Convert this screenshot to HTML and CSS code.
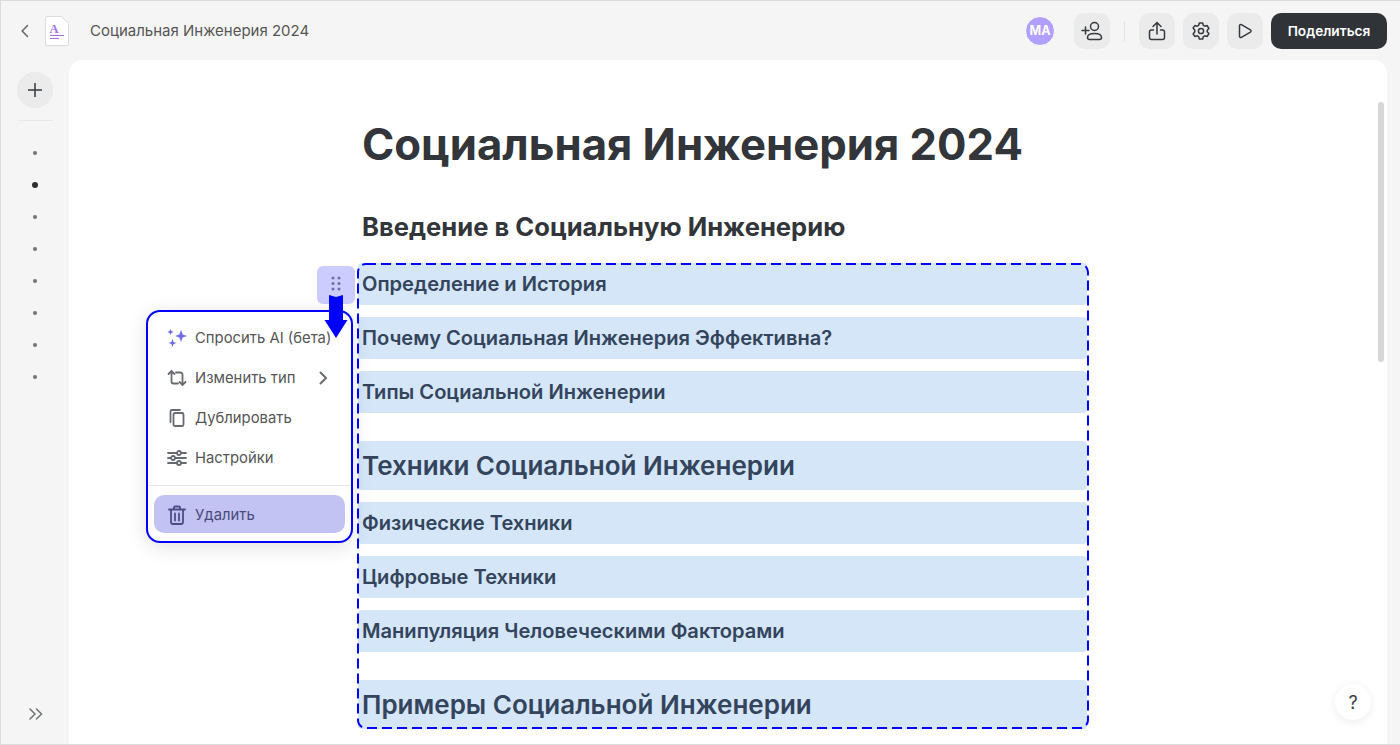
FILE: index.html
```html
<!DOCTYPE html>
<html>
<head>
    <title>Социальная Инженерия 2024</title>
    <link rel="stylesheet" href="styles.css">
</head>
<body>
    <div class="app">
        <div class="topbar">
            <svg class="back-icon" width="10" height="16" viewBox="0 0 10 16"><path d="M7.5 2.5 2.2 8l5.3 5.5"/></svg>
            <svg class="doc-icon" width="24" height="30" viewBox="0 0 24 30">
                <path class="doc-sheet" d="M2 .5h14.500l7 7V27.500a2 2 0 0 1-2 2H2a1.500 1.500 0 0 1-1.500-1.500V2A1.500 1.500 0 0 1 2 .5z"/>
                <text class="doc-letter" x="4.500" y="17">A</text>
                <path class="doc-line" d="M5 19.500h14M5 22.500h9"/>
            </svg>
            <span class="doc-title">Социальная Инженерия 2024</span>
            <div class="topbar-right">
                <div class="avatar">MA</div>
                <div class="icon-btn add-user">
                    <svg width="22" height="20" viewBox="0 0 22 20"><path d="M1 9.500h7M4.500 6v7"/><circle cx="13.500" cy="5.500" r="4"/><path d="M8.500 18.500h10a2 2 0 0 0 2-2c0-2.500-3-4-7-4s-7 1.500-7 4a2 2 0 0 0 2 2z"/></svg>
                </div>
                <div class="topbar-sep"></div>
                <div class="icon-btn">
                    <svg width="18" height="20" viewBox="0 0 18 20"><path d="M9 13V2M5 5.500 9 1.500l4 4"/><path d="M5.500 9H3.500a2 2 0 0 0-2 2v5.500a2 2 0 0 0 2 2h11a2 2 0 0 0 2-2V11a2 2 0 0 0-2-2h-2"/></svg>
                </div>
                <div class="icon-btn">
                    <svg width="18" height="18" viewBox="0 0 18 18"><circle cx="9" cy="9" r="2.600"/><path d="M7.300 1h3.400l.6 2.300 1.600.9 2.300-.6 1.700 2.900-1.700 1.700v1.600l1.700 1.700-1.700 2.900-2.300-.6-1.600.9-.6 2.300H7.300l-.6-2.300-1.600-.9-2.300.6L1.100 12l1.700-2.200V8.200L1.100 6l1.700-2.400 2.300.6 1.600-.9z" stroke-linejoin="round"/></svg>
                </div>
                <div class="icon-btn">
                    <svg width="16" height="16" viewBox="0 0 16 16"><path d="M2.500 2.800c0-1 1-1.600 1.900-1.100l9 5.200c.8.500.8 1.700 0 2.200l-9 5.200c-.9.500-1.900-.1-1.900-1.100z" stroke-linejoin="round"/></svg>
                </div>
                <div class="share-btn">Поделиться</div>
            </div>
        </div>

        <div class="workspace">
            <div class="sidebar">
                <div class="add-btn">
                    <svg width="14" height="14" viewBox="0 0 14 14"><path d="M7 0v14M0 7h14"/></svg>
                </div>
                <div class="sidebar-sep"></div>
                <div class="outline">
                    <span class="dot"></span>
                    <span class="dot active"></span>
                    <span class="dot"></span>
                    <span class="dot"></span>
                    <span class="dot"></span>
                    <span class="dot"></span>
                    <span class="dot"></span>
                    <span class="dot"></span>
                </div>
                <svg class="expand-icon" width="14" height="12" viewBox="0 0 14 12"><path d="M1 1l5 5-5 5M7.500 1l5 5-5 5"/></svg>
            </div>

            <div class="main">
                <div class="doc">
                    <h1>Социальная Инженерия 2024</h1>
                    <h2>Введение в Социальную Инженерию</h2>
                    <div class="selection">
                        <div class="block">Определение и История</div>
                        <div class="block">Почему Социальная Инженерия Эффективна?</div>
                        <div class="block">Типы Социальной Инженерии</div>
                        <div class="block big">Техники Социальной Инженерии</div>
                        <div class="block">Физические Техники</div>
                        <div class="block">Цифровые Техники</div>
                        <div class="block">Манипуляция Человеческими Факторами</div>
                        <div class="block big">Примеры Социальной Инженерии</div>
                    </div>
                </div>

                <svg class="selection-frame" width="732" height="466" viewBox="0 0 732 466"><rect x="1" y="1" width="730" height="464" rx="8"/></svg>

                <div class="scrollbar"></div>

                <div class="drag-handle">
                    <svg width="10" height="18" viewBox="0 0 10 18">
                        <circle cx="2" cy="2" r="1.500"/><circle cx="8" cy="2" r="1.500"/>
                        <circle cx="2" cy="7.500" r="1.500"/><circle cx="8" cy="7.500" r="1.500"/>
                        <circle cx="2" cy="13" r="1.500"/><circle cx="8" cy="13" r="1.500"/>
                    </svg>
                </div>

                <div class="menu">
                    <div class="menu-item">
                        <svg width="20" height="20" viewBox="0 0 20 20" class="sparkle">
                            <path d="M14 2l1.600 4.400L20 8l-4.400 1.600L14 14l-1.600-4.400L8 8l4.400-1.600z"/>
                            <path d="M3.500 1l.9 2.100L6.500 4l-2.100.9L3.500 7l-.9-2.100L.5 4l2.100-.9z"/>
                            <path d="M5.500 11l1.100 2.900 2.900 1.100-2.900 1.100L5.500 19l-1.100-2.900L1.500 15l2.900-1.100z"/>
                        </svg>
                        <span>Спросить AI (бета)</span>
                    </div>
                    <div class="menu-item">
                        <svg width="20" height="18" viewBox="0 0 20 18"><path d="M1.500 5 4.500 2l3 3M4.500 2.500v10a2 2 0 0 0 2 2H11"/><path d="M18.500 13l-3 3-3-3M15.500 15.500v-10a2 2 0 0 0-2-2H9"/></svg>
                        <span>Изменить тип</span>
                        <svg class="menu-chevron" width="9" height="14" viewBox="0 0 9 14"><path d="M1.500 1.500 7 7l-5.500 5.500"/></svg>
                    </div>
                    <div class="menu-item">
                        <svg width="20" height="18" viewBox="0 0 20 18"><rect x="6.500" y="4" width="10" height="13" rx="1.500"/><path d="M13 1H5a1.500 1.500 0 0 0-1.500 1.500V13"/></svg>
                        <span>Дублировать</span>
                    </div>
                    <div class="menu-item">
                        <svg width="20" height="16" viewBox="0 0 20 16"><path d="M1 3h9M14 3h5M1 8h3M8 8h11M1 13h9M14 13h5"/><circle cx="12" cy="3" r="2"/><circle cx="6" cy="8" r="2"/><circle cx="12" cy="13" r="2"/></svg>
                        <span>Настройки</span>
                    </div>
                    <div class="menu-sep"></div>
                    <div class="menu-item danger">
                        <svg width="20" height="20" viewBox="0 0 20 20"><path d="M2 4.500h16M7 4.500V2.500a1 1 0 0 1 1-1h4a1 1 0 0 1 1 1v2M4 4.500v12.500a2 2 0 0 0 2 2h8a2 2 0 0 0 2-2V4.500M8 8.500v7M12 8.500v7"/></svg>
                        <span>Удалить</span>
                    </div>
                </div>

                <svg class="arrow" width="24" height="44" viewBox="0 0 24 44"><path d="M5 0l7 2 7-2v25h4.500L12 43 .5 25H5z"/></svg>

                <div class="help-btn">?</div>
            </div>
        </div>
    </div>
</body>
</html>
```

FILE: styles.css
```css
body {
    margin: 0;
    font-family: Inter, "Noto Sans", sans-serif;
    background-color: #f5f5f5;
    overflow: hidden;
}

.app {
    width: 1400px;
    height: 745px;
    box-sizing: border-box;
    border: 1px solid #dcdcdc;
    border-right: none;
    display: flex;
    flex-direction: column;
    background-color: #f5f5f5;
}

svg {
    fill: none;
    stroke: #54585e;
    stroke-width: 1.500;
    stroke-linecap: round;
    display: block;
    flex-shrink: 0;
}

.topbar {
    height: 59px;
    flex-shrink: 0;
    display: flex;
    align-items: center;
    padding: 0 13px 0 19px;
}

.back-icon {
    stroke: #666;
    margin-right: 15px;
}

.doc-icon {
    margin-right: 21px;
}

.doc-sheet {
    fill: #fff;
    stroke: #dcdcdc;
    stroke-width: 1;
}

.doc-letter {
    font-family: "Liberation Serif", serif;
    font-size: 12.500px;
    font-weight: 700;
    fill: #a46ee0;
    stroke: none;
}

.doc-line {
    stroke: #a46ee0;
    stroke-width: 1.200;
    stroke-linecap: butt;
}

.doc-title {
    font-size: 15px;
    color: #555;
}

.topbar-right {
    margin-left: auto;
    display: flex;
    align-items: center;
    gap: 8px;
}

.avatar {
    width: 30px;
    height: 30px;
    box-sizing: border-box;
    border: 1.500px solid #fff;
    border-radius: 50%;
    background-color: #b1a0ff;
    color: #fff;
    font-size: 12.500px;
    font-weight: 700;
    display: flex;
    align-items: center;
    justify-content: center;
    margin-right: 11px;
}

.icon-btn {
    width: 36px;
    height: 36px;
    border-radius: 10px;
    background-color: #ebebeb;
    display: flex;
    align-items: center;
    justify-content: center;
}

.icon-btn svg {
    stroke: #36393d;
}

.topbar-sep {
    width: 1px;
    height: 20px;
    background-color: #e3e3e3;
    margin: 0 6px;
}

.share-btn {
    width: 116px;
    height: 36px;
    border-radius: 10px;
    background-color: #303438;
    color: #fff;
    font-size: 13.700px;
    font-weight: 600;
    display: flex;
    align-items: center;
    justify-content: center;
}

.workspace {
    flex: 1;
    display: flex;
    min-height: 0;
}

.sidebar {
    width: 68px;
    flex-shrink: 0;
    display: flex;
    flex-direction: column;
    align-items: center;
    padding-top: 12px;
    box-sizing: border-box;
}

.add-btn {
    width: 36px;
    height: 36px;
    border-radius: 50%;
    background-color: #ebebeb;
    display: flex;
    align-items: center;
    justify-content: center;
}

.add-btn svg {
    stroke: #36393d;
    stroke-linecap: butt;
}

.sidebar-sep {
    width: 36px;
    height: 1px;
    background-color: #e8e8e8;
    margin-top: 12px;
}

.outline {
    display: flex;
    flex-direction: column;
    align-items: center;
    gap: 28px;
    margin-top: 30px;
}

.dot {
    width: 4px;
    height: 4px;
    border-radius: 50%;
    background-color: #6e7479;
}

.dot.active {
    width: 6px;
    height: 6px;
    margin: -1px 0;
    background-color: #2c2f33;
}

.expand-icon {
    margin-top: auto;
    margin-bottom: 24px;
    margin-left: 2px;
    stroke: #70757a;
}

.main {
    flex: 1;
    position: relative;
    background-color: #fff;
    border-radius: 14px 14px 0 0;
    margin-right: 13px;
    overflow: hidden;
}

.doc {
    width: 729px;
    margin-left: 289px;
    padding-top: 55px;
}

h1 {
    margin: 0 0 0 4px;
    font-size: 43.700px;
    line-height: 60px;
    font-weight: 700;
    color: #32353a;
}

h2 {
    margin: 36px 0 0 4px;
    font-size: 25.600px;
    line-height: 32px;
    font-weight: 700;
    color: #32353a;
}

.selection {
    margin-top: 20px;
    display: flex;
    flex-direction: column;
    gap: 12px;
}

.block {
    height: 42px;
    line-height: 42px;
    padding-left: 4px;
    background-color: #d4e6f8;
    border-radius: 4px;
    font-size: 20.080px;
    font-weight: 600;
    color: #33445c;
}

.block.big {
    height: 49px;
    line-height: 50px;
    margin-top: 16px;
    font-size: 26px;
}

.selection-frame {
    position: absolute;
    left: 288px;
    top: 203px;
    fill: none;
    stroke: #0000ff;
    stroke-width: 2;
    stroke-linecap: butt;
    stroke-dasharray: 10 5;
}

.scrollbar {
    position: absolute;
    right: 3px;
    top: 42px;
    width: 6px;
    height: 260px;
    border-radius: 3px;
    background-color: #d6d6d6;
}

.drag-handle {
    position: absolute;
    left: 248px;
    top: 206px;
    width: 38px;
    height: 38px;
    border-radius: 6px;
    background-color: #ccccff;
    display: flex;
    align-items: center;
    justify-content: center;
}

.drag-handle svg {
    fill: #6e6eaa;
    stroke: none;
}

.menu {
    position: absolute;
    left: 77px;
    top: 250px;
    width: 207px;
    height: 233px;
    box-sizing: border-box;
    border: 2px solid #0000ff;
    border-radius: 14px;
    background-color: #fff;
    box-shadow: 0 4px 20px rgba(0, 0, 0, 0.12);
    padding: 6px 6px 8px;
}

.menu-item {
    height: 40px;
    display: flex;
    align-items: center;
    padding-left: 13px;
    font-size: 14.850px;
    color: #555;
}

.menu-item svg {
    width: 20px;
    margin-right: 8px;
    stroke: #666b71;
    stroke-width: 1.800;
}

.menu-item .sparkle {
    fill: #6f6ae8;
    stroke: none;
}

.menu-item .menu-chevron {
    width: 9px;
    margin: 0 0 0 24px;
    stroke-width: 2;
}

.menu-sep {
    height: 1px;
    background-color: #e6e6e6;
    margin: 7px -6px 9px;
}

.menu-item.danger {
    height: 38px;
    box-sizing: border-box;
    padding-top: 1px;
    border-radius: 10px;
    background-color: #c3c3f3;
    color: #4a4a78;
}

.menu-item.danger svg {
    stroke: #4d4d86;
}

.arrow {
    position: absolute;
    left: 255px;
    top: 235px;
    fill: #0000ff;
    stroke: none;
}

.help-btn {
    position: absolute;
    right: 16px;
    bottom: 24px;
    width: 36px;
    height: 36px;
    border-radius: 50%;
    background-color: #fff;
    box-shadow: 0 2px 10px rgba(0, 0, 0, 0.08);
    color: #3a3d41;
    font-size: 18px;
    display: flex;
    align-items: center;
    justify-content: center;
}
```
